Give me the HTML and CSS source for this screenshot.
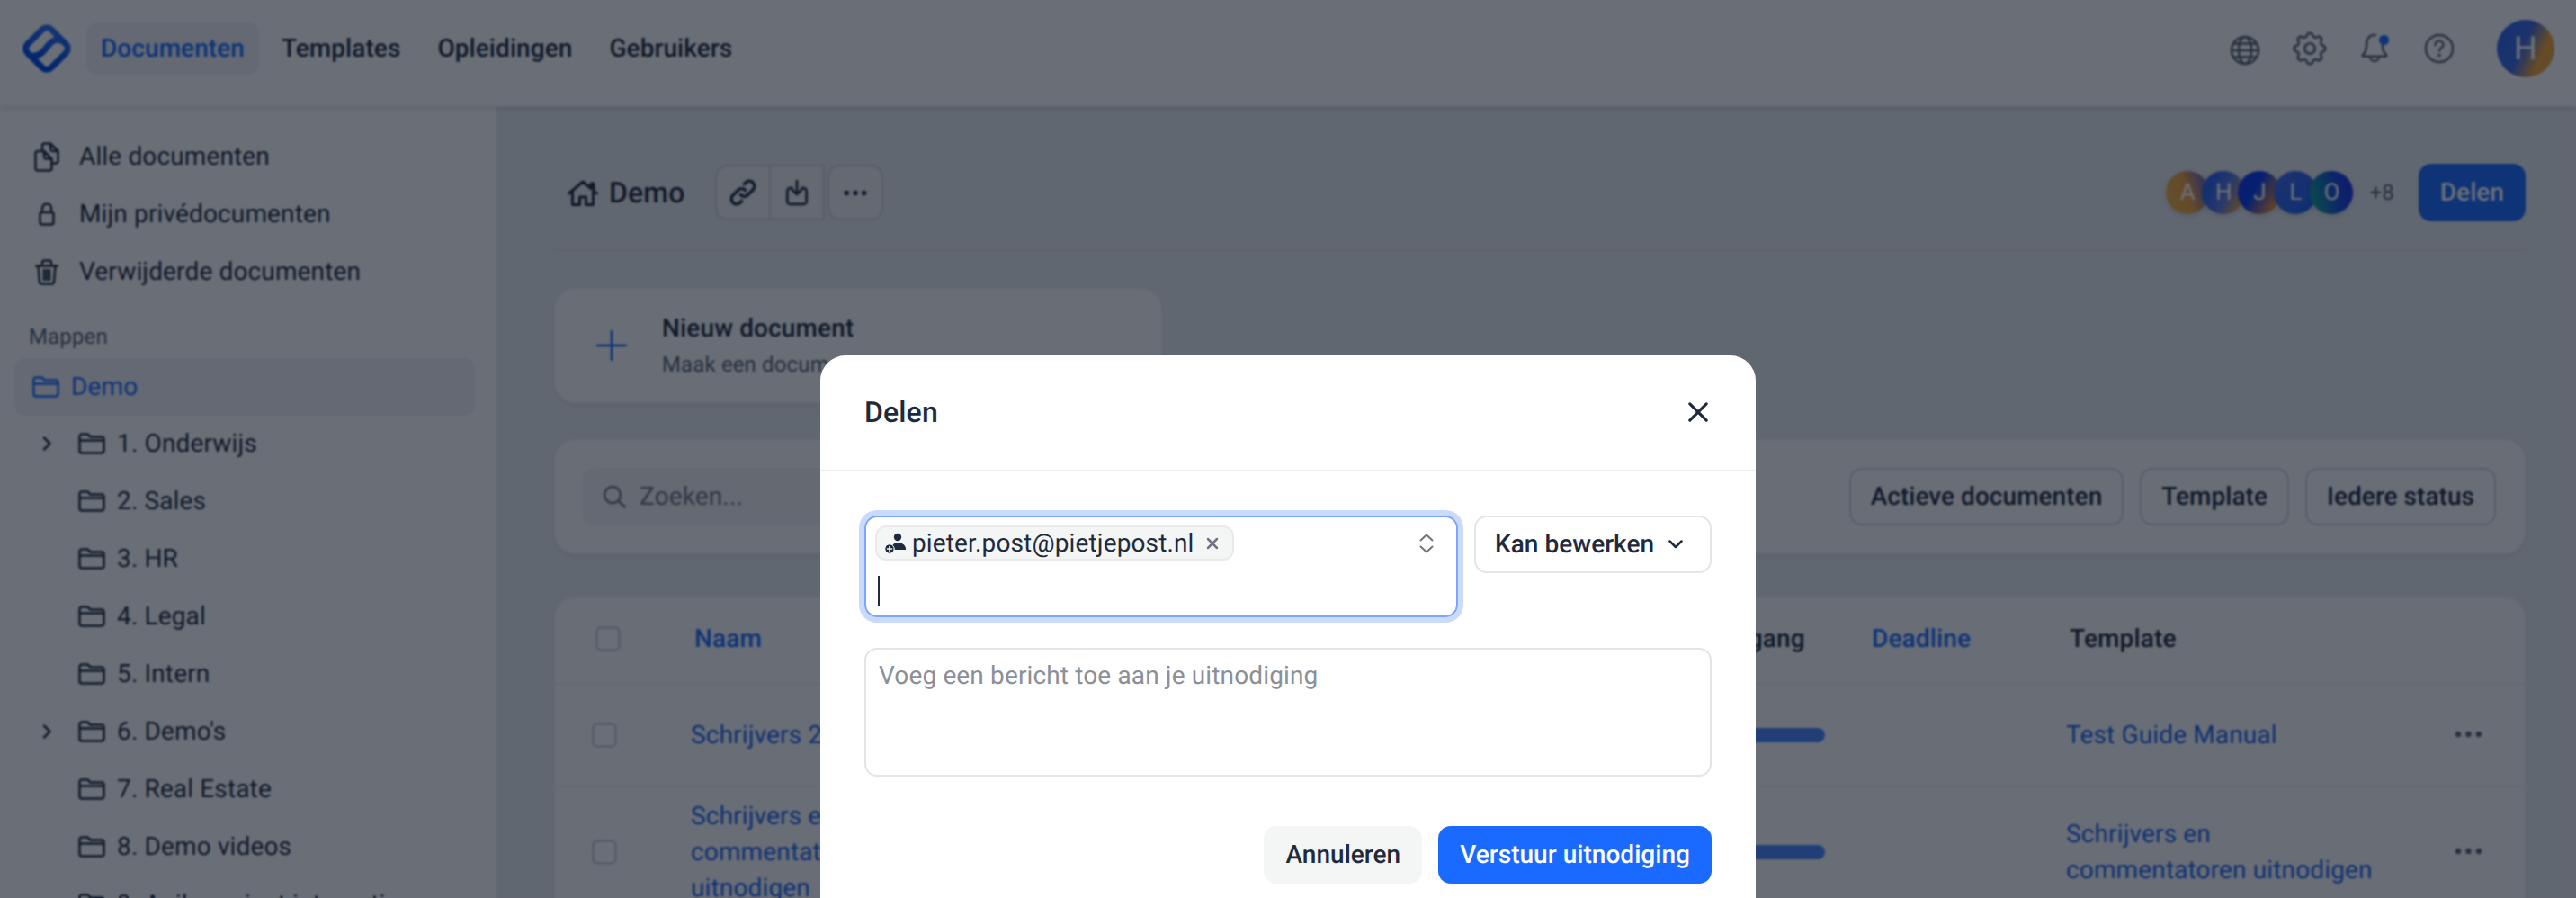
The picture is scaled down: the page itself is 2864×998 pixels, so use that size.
FILE: index.html
```html
<!DOCTYPE html>
<html lang="nl">
<head>
  <meta charset="UTF-8" />
  <title>Documenten - Demo</title>
  <link rel="stylesheet" href="styles.css">
</head>
<body>
  <svg class="sprite" xmlns="http://www.w3.org/2000/svg">
    <symbol id="i-folder" viewBox="0 0 30 24">
      <path d="M1.5 4A2.5 2.5 0 014 1.5h6.5l3 3H26A2.5 2.5 0 0128.5 7v13a2.5 2.5 0 01-2.5 2.5H4A2.5 2.5 0 011.5 20zM1.5 8.5h27" />
    </symbol>
    <symbol id="i-chevron" viewBox="0 0 12 18">
      <path d="M3 2.5L9.5 9 3 15.5" />
    </symbol>
    <symbol id="i-dots" viewBox="0 0 31 8">
      <circle class="solid" cx="4" cy="4" r="3.2" />
      <circle class="solid" cx="15.5" cy="4" r="3.2" />
      <circle class="solid" cx="27" cy="4" r="3.2" />
    </symbol>
  </svg>

  <div class="topbar">
    <svg class="logo" viewBox="0 0 56 56" xmlns="http://www.w3.org/2000/svg">
      <defs>
        <linearGradient id="logo-grad" x1="0" y1="0" x2="0.4" y2="1">
          <stop offset="0" stop-color="#2a70f5" />
          <stop offset="1" stop-color="#0048e8" />
        </linearGradient>
      </defs>
      <rect x="9.5" y="9.5" width="37" height="37" rx="7" transform="rotate(45 28 28)" fill="none" stroke="url(#logo-grad)" stroke-width="7" />
      <path d="M46 20C36 14 30 24 26 29C22 34 17 37 10 36" fill="none" stroke="url(#logo-grad)" stroke-width="7" />
    </svg>
    <a class="toplink active">Documenten</a>
    <a class="toplink">Templates</a>
    <a class="toplink">Opleidingen</a>
    <a class="toplink">Gebruikers</a>
    <div class="topicons">
      <svg class="topicon" viewBox="0 0 40 40" xmlns="http://www.w3.org/2000/svg">
        <circle cx="20" cy="22" r="15" />
        <ellipse cx="20" cy="22" rx="7" ry="15" />
        <path d="M5 22h30M7.5 14.5h25M7.5 29.5h25" />
      </svg>
      <svg class="topicon gear" viewBox="0 0 24 24" xmlns="http://www.w3.org/2000/svg">
        <path d="M10.325 4.317c.426-1.756 2.924-1.756 3.35 0a1.724 1.724 0 002.573 1.066c1.543-.94 3.31.826 2.37 2.37a1.724 1.724 0 001.065 2.572c1.756.426 1.756 2.924 0 3.35a1.724 1.724 0 00-1.066 2.573c.94 1.543-.826 3.31-2.37 2.37a1.724 1.724 0 00-2.572 1.065c-.426 1.756-2.924 1.756-3.35 0a1.724 1.724 0 00-2.573-1.066c-1.543.94-3.31-.826-2.37-2.37a1.724 1.724 0 00-1.065-2.572c-1.756-.426-1.756-2.924 0-3.35a1.724 1.724 0 001.066-2.573c-.94-1.543.826-3.31 2.37-2.37.996.608 2.296.07 2.572-1.065z" />
        <path d="M15 12a3 3 0 11-6 0 3 3 0 016 0z" />
      </svg>
      <div class="bell">
        <svg class="topicon" viewBox="0 0 40 40" xmlns="http://www.w3.org/2000/svg">
          <path d="M21 5C14 4 11 10 11 15v4c0 4-2 6-4 8a1 1 0 00.8 1.7h24.4a1 1 0 00.8-1.7c-2-2-4-4-4-8v-3" />
          <path d="M15 29a5 5 0 0010 0" />
        </svg>
        <span class="bell-dot"></span>
      </div>
      <svg class="topicon" viewBox="0 0 40 40" xmlns="http://www.w3.org/2000/svg">
        <circle cx="20" cy="20" r="15" />
        <path d="M15.5 16a4.5 4.5 0 119 0c0 3-4.5 3.5-4.5 6.5" />
        <circle class="solid" cx="20" cy="27.5" r="1.8" />
      </svg>
    </div>
    <div class="avatar-big">H</div>
  </div>

  <div class="page">
    <div class="sidebar">
      <a class="navitem">
        <span class="navicon">
          <svg viewBox="0 0 28 33" width="28" height="33" xmlns="http://www.w3.org/2000/svg">
            <path d="M9 9V4a2.5 2.5 0 012.5-2.5H18L26.5 10v11a2.5 2.5 0 01-2.5 2.5h-4.5M18 1.5V7a3 3 0 003 3h5.5" />
            <path d="M4 10h7l8.5 8.5V29a2.5 2.5 0 01-2.5 2.5H4A2.5 2.5 0 011.5 29V12.5A2.5 2.5 0 014 10zM11 10v6a2.5 2.5 0 002.5 2.5h6" />
          </svg>
        </span>
        Alle documenten
      </a>
      <a class="navitem">
        <span class="navicon">
          <svg viewBox="0 0 18 26" width="18" height="26" xmlns="http://www.w3.org/2000/svg">
            <rect x="1.5" y="11" width="15" height="13.5" rx="2.5" />
            <path d="M4 11V6.5a5 5 0 0110 0V11" />
          </svg>
        </span>
        Mijn privédocumenten
      </a>
      <a class="navitem">
        <span class="navicon">
          <svg viewBox="0 0 26 29" width="26" height="29" xmlns="http://www.w3.org/2000/svg">
            <path d="M1 7.5h24M8 7V4a2.5 2.5 0 012.5-2.5h5A2.5 2.5 0 0118 4v3M3.5 8L5 25.5a2.5 2.5 0 002.5 2h11a2.5 2.5 0 002.5-2L22.5 8M10 12v11M13 12v11M16 12v11" />
          </svg>
        </span>
        Verwijderde documenten
      </a>

      <div class="section-label">Mappen</div>

      <a class="folder-root">
        <svg class="folder" xmlns="http://www.w3.org/2000/svg"><use href="#i-folder" /></svg>
        Demo
      </a>
      <a class="treeitem"><span class="chev"><svg xmlns="http://www.w3.org/2000/svg"><use href="#i-chevron" /></svg></span><svg class="folder" xmlns="http://www.w3.org/2000/svg"><use href="#i-folder" /></svg>1. Onderwijs</a>
      <a class="treeitem"><span class="chev"></span><svg class="folder" xmlns="http://www.w3.org/2000/svg"><use href="#i-folder" /></svg>2. Sales</a>
      <a class="treeitem"><span class="chev"></span><svg class="folder" xmlns="http://www.w3.org/2000/svg"><use href="#i-folder" /></svg>3. HR</a>
      <a class="treeitem"><span class="chev"></span><svg class="folder" xmlns="http://www.w3.org/2000/svg"><use href="#i-folder" /></svg>4. Legal</a>
      <a class="treeitem"><span class="chev"></span><svg class="folder" xmlns="http://www.w3.org/2000/svg"><use href="#i-folder" /></svg>5. Intern</a>
      <a class="treeitem"><span class="chev"><svg xmlns="http://www.w3.org/2000/svg"><use href="#i-chevron" /></svg></span><svg class="folder" xmlns="http://www.w3.org/2000/svg"><use href="#i-folder" /></svg>6. Demo's</a>
      <a class="treeitem"><span class="chev"></span><svg class="folder" xmlns="http://www.w3.org/2000/svg"><use href="#i-folder" /></svg>7. Real Estate</a>
      <a class="treeitem"><span class="chev"></span><svg class="folder" xmlns="http://www.w3.org/2000/svg"><use href="#i-folder" /></svg>8. Demo videos</a>
      <a class="treeitem"><span class="chev"></span><svg class="folder" xmlns="http://www.w3.org/2000/svg"><use href="#i-folder" /></svg>9. Agile project integratie</a>
    </div>

    <div class="main">
      <div class="titlebar">
        <svg class="home" viewBox="0 0 34 29" xmlns="http://www.w3.org/2000/svg">
          <path d="M1.5 15L17 2l9 7.5V4h3v8.5l3.5 2.5M5.5 12.5V27.5h8V19h7v8.5h8V12.5" />
        </svg>
        <h1 class="title">Demo</h1>
        <div class="btngroup">
          <button class="iconbtn">
            <svg viewBox="0 0 24 24" width="34" height="34" xmlns="http://www.w3.org/2000/svg">
              <path d="M13.828 10.172a4 4 0 00-5.656 0l-4 4a4 4 0 105.656 5.656l1.102-1.101m-.758-4.899a4 4 0 005.656 0l4-4a4 4 0 00-5.656-5.656l-1.1 1.1" />
            </svg>
          </button>
          <button class="iconbtn">
            <svg viewBox="0 0 24 28" width="26" height="30" xmlns="http://www.w3.org/2000/svg">
              <path d="M7 9.5H5a3 3 0 00-3 3V23a3 3 0 003 3h14a3 3 0 003-3V12.5a3 3 0 00-3-3h-2M12 2v14M7.5 11.5L12 16l4.5-4.5" />
            </svg>
          </button>
          <button class="iconbtn alone">
            <svg class="dots" xmlns="http://www.w3.org/2000/svg"><use href="#i-dots" /></svg>
          </button>
        </div>
        <div class="members">
          <span class="member m1">A</span>
          <span class="member m2">H</span>
          <span class="member m3">J</span>
          <span class="member m4">L</span>
          <span class="member m5">O</span>
        </div>
        <span class="more">+8</span>
        <button class="btn-primary">Delen</button>
      </div>

      <div class="card newdoc">
        <svg class="plus" viewBox="0 0 34 34" xmlns="http://www.w3.org/2000/svg"><path d="M17 1v32M1 17h32" /></svg>
        <div class="newdoc-text">
          <div class="newdoc-title">Nieuw document</div>
          <div class="newdoc-sub">Maak een document aan</div>
        </div>
      </div>

      <div class="card filters">
        <div class="search">
          <svg viewBox="0 0 26 26" width="26" height="26" xmlns="http://www.w3.org/2000/svg">
            <circle cx="11" cy="11" r="9" /><path d="M18 18l6.5 6.5" />
          </svg>
          Zoeken...
        </div>
        <button class="filter">Actieve documenten</button>
        <button class="filter">Template</button>
        <button class="filter">Iedere status</button>
      </div>

      <div class="card table">
        <div class="grid head">
          <span class="check"></span>
          <span class="sorted">Naam</span>
          <span class="col-progress">Voortgang</span>
          <span class="sorted">Deadline</span>
          <span>Template</span>
        </div>
        <div class="grid row">
          <span class="check"></span>
          <a class="doclink">Schrijvers 2</a>
          <span class="bar"></span>
          <span></span>
          <a class="doclink tpl">Test Guide Manual</a>
          <svg class="dots" xmlns="http://www.w3.org/2000/svg"><use href="#i-dots" /></svg>
        </div>
        <div class="grid row">
          <span class="check"></span>
          <a class="doclink narrow">Schrijvers en commentatoren uitnodigen</a>
          <span class="bar"></span>
          <span></span>
          <a class="doclink tpl">Schrijvers en commentatoren uitnodigen</a>
          <svg class="dots" xmlns="http://www.w3.org/2000/svg"><use href="#i-dots" /></svg>
        </div>
      </div>
    </div>
  </div>

  <div class="overlay">
    <div class="modal">
      <div class="modal-head">
        <h2 class="modal-title">Delen</h2>
        <svg class="close" viewBox="0 0 24 24" xmlns="http://www.w3.org/2000/svg"><path d="M2 2l20 20M22 2L2 22" /></svg>
      </div>
      <div class="modal-body">
        <div class="invite-row">
          <div class="invite-input">
            <div>
              <span class="chip">
                <svg class="chip-user" viewBox="0 0 24 24" xmlns="http://www.w3.org/2000/svg">
                  <circle cx="15" cy="5" r="4.2" />
                  <path d="M8 19c0-5 3-8 7-8s9 2.5 9 7v1z" />
                  <circle class="plus-badge" cx="6" cy="18" r="5.2" />
                  <path class="plusmark" d="M6 15.5v5M3.5 18h5" />
                </svg>
                pieter.post@pietjepost.nl
                <svg class="chip-x" viewBox="0 0 14 14" xmlns="http://www.w3.org/2000/svg"><path d="M2 2l10 10M12 2L2 12" /></svg>
              </span>
              <span class="caret"></span>
            </div>
            <svg class="updown" viewBox="0 0 16 22" xmlns="http://www.w3.org/2000/svg"><path d="M1.5 7.5L8 1.5l6.5 6M1.5 14.5L8 20.5l6.5-6" /></svg>
          </div>
          <div class="select">
            Kan bewerken
            <svg viewBox="0 0 16 10" width="16" height="10" xmlns="http://www.w3.org/2000/svg"><path d="M1.5 1.5L8 8l6.5-6.5" /></svg>
          </div>
        </div>
        <textarea class="message" placeholder="Voeg een bericht toe aan je uitnodiging" readonly></textarea>
        <div class="modal-foot">
          <button class="btn-soft">Annuleren</button>
          <button class="btn-primary bright">Verstuur uitnodiging</button>
        </div>
      </div>
    </div>
  </div>
</body>
</html>
```

FILE: styles.css
```css
* { box-sizing: border-box; }
html, body { height: 100%; }
body {
  margin: 0;
  font-family: Roboto, sans-serif;
  font-size: 28px;
  line-height: 40px;
  letter-spacing: .14px;
  text-rendering: geometricPrecision;
  color: #1f2a3d;
  background: #e9ebee;
  display: flex;
  flex-direction: column;
  overflow: hidden;
}
.sprite { display: none; }
svg { fill: none; stroke: currentColor; stroke-width: 2.5; stroke-linecap: round; stroke-linejoin: round; flex: none; }
svg .solid { fill: currentColor; stroke: none; }
button { font: inherit; letter-spacing: inherit; color: inherit; cursor: pointer; background: none; border: none; padding: 0; text-rendering: inherit; }
h1, h2 { margin: 0; }

/* top bar */
.topbar {
  height: 119px;
  flex: none;
  display: flex;
  align-items: center;
  padding: 0 24px 10px;
  background: #fff;
  border-bottom: 2px solid #eceef0;
  box-shadow: 0 2px 6px rgba(16, 24, 40, .12);
  position: relative;
  z-index: 2;
}
.logo { width: 56px; height: 56px; margin-right: 16px; }
.toplink {
  height: 58px;
  display: flex;
  align-items: center;
  padding: 0 16px;
  margin-right: 9px;
  border-radius: 12px;
  font-weight: 500;
  letter-spacing: .07px;
}
.toplink.active { background: #eff1f8; color: #1a6aff; }
.topicons { margin-left: auto; display: flex; align-items: center; gap: 32px; color: #5b6475; }
.topicon { width: 40px; height: 40px; display: block; }
.topicon.gear { width: 46px; height: 46px; margin: -3px; stroke-width: 1.4; }
.bell { position: relative; }
.bell-dot {
  position: absolute;
  top: 5px;
  right: 4px;
  width: 11px;
  height: 11px;
  border-radius: 50%;
  background: #1a6aff;
}
.avatar-big {
  width: 64px;
  height: 64px;
  margin: 0 0 0 44px;
  border-radius: 50%;
  display: flex;
  align-items: center;
  justify-content: center;
  color: #fff;
  font-size: 36px;
  background: linear-gradient(115deg, #2c62f0 0%, #3f68e0 45%, #f2a53a 72%);
}

.page { flex: 1; display: flex; min-height: 0; }

/* sidebar */
.sidebar {
  width: 554px;
  flex: none;
  padding: 23px 24px 0 16px;
  background: #fff;
  border-right: 2px solid #e9ebee;
  overflow: hidden;
}
.navitem {
  height: 64px;
  display: flex;
  align-items: center;
  padding-left: 16px;
}
.navicon { width: 40px; margin-right: 16px; display: flex; justify-content: center; }
.section-label {
  margin: 25px 0 9px 16px;
  font-size: 24px;
  line-height: 30px;
  color: #5b6475;
}
.folder-root {
  height: 64px;
  margin-bottom: -1px;
  display: flex;
  align-items: center;
  padding-left: 20px;
  border-radius: 12px;
  background: #eff1f8;
  color: #1a6aff;
}
.folder { width: 30px; height: 24px; margin-right: 13px; }
.treeitem { height: 64px; display: flex; align-items: center; padding-left: 20px; }
.chev { width: 32px; margin-right: 19px; display: flex; justify-content: center; }
.chev svg { width: 12px; height: 18px; }

/* main column */
.main { flex: 1; min-width: 0; padding: 0 56px 0 62px; }
.titlebar {
  display: flex;
  align-items: center;
  padding: 63px 0 31px 15px;
  border-bottom: 2px solid #dcdfe3;
  margin-bottom: 41px;
}
.home { width: 34px; height: 29px; margin-right: 12px; stroke-width: 3; }
.title { font-size: 32px; font-weight: 500; }
.btngroup { display: flex; margin-left: 33px; }
.iconbtn {
  width: 62px;
  height: 62px;
  display: flex;
  align-items: center;
  justify-content: center;
  border: 2px solid #d2d5da;
  margin-left: -2px;
  background: #eff0f2;
}
.iconbtn:first-child { border-radius: 14px 0 0 14px; margin-left: 0; }
.iconbtn.alone { border-radius: 14px; margin-left: 3px; }
.dots { width: 31px; height: 8px; color: #5b6475; }
.iconbtn .dots { width: 26px; height: 7px; color: #1f2a3d; }
.members { margin-left: auto; display: flex; }
.member {
  width: 48px;
  height: 48px;
  margin-left: -8px;
  border-radius: 50%;
  display: flex;
  align-items: center;
  justify-content: center;
  color: #fff;
  font-size: 26px;
  box-shadow: 0 2px 6px rgba(16, 24, 40, .15);
}
.member:first-child { margin-left: 0; }
.m1 { background: linear-gradient(70deg, #f0b845 0%, #f2a040 50%, #3f58d8 100%); }
.m2 { background: linear-gradient(115deg, #2c62f0 25%, #5a78e0 55%, #f2a53a 90%); }
.m3 { background: linear-gradient(120deg, #0838f0 40%, #f09030 85%, #f04a20 100%); }
.m4 { background: linear-gradient(135deg, #3f68e8 0%, #1a5ff0 100%); }
.m5 { background: linear-gradient(75deg, #0f9a9a 15%, #1548d8 60%, #1a28f0 100%); }
.more { margin: 0 27px 0 18px; font-size: 24px; color: #5b6475; }
.btn-primary {
  height: 64px;
  padding: 0 24px;
  border-radius: 14px;
  background: #1a6aff;
  color: #fff;
  font-weight: 500;
  letter-spacing: .04px;
}
.card {
  background: #fcfcfd;
  border-radius: 24px;
  border: 2px solid #f4f5f6;
  box-shadow: 0 2px 5px rgba(16, 24, 40, .08);
}
.newdoc {
  width: 676px;
  height: 128px;
  display: flex;
  align-items: center;
  padding-left: 45px;
  margin-bottom: 40px;
}
.plus { width: 34px; height: 34px; margin-right: 39px; color: #1a6aff; }
.newdoc-text { padding-top: 2px; }
.newdoc-title { font-weight: 500; }
.newdoc-sub { font-size: 24px; color: #5b6475; }
.filters {
  height: 128px;
  display: flex;
  align-items: center;
  gap: 18px;
  padding: 0 31px 0 30px;
  margin-bottom: 47px;
}
.search {
  width: 800px;
  height: 64px;
  margin-right: auto;
  display: flex;
  align-items: center;
  gap: 15px;
  padding-left: 22px;
  border-radius: 12px;
  background: #f0f1f3;
  color: #70767f;
}
.filter {
  height: 64px;
  padding: 0 22px;
  border: 2px solid #d2d5da;
  border-radius: 14px;
  font-weight: 500;
  letter-spacing: .04px;
}

/* document table */
.table { overflow: hidden; }
.grid {
  display: grid;
  grid-template-columns: 150px 1096px 213px 220px 400px 1fr;
  align-items: center;
  border-bottom: 2px solid #eceef0;
}
.head { height: 96px; padding: 0 0 4px 4px; font-weight: 500; }
.col-progress { padding-left: 6px; }
.row { min-height: 114px; padding: 12px 0; }
.check {
  display: block;
  width: 28px;
  height: 28px;
  margin-left: 40px;
  border: 3px solid #d3d6db;
  border-radius: 6px;
  background: #fff;
}
.sorted { color: #1a6aff; }
.doclink { color: #1a62f0; }
.doclink.narrow { display: block; width: 220px; }
.doclink.tpl { display: block; width: 345px; }
.bar {
  display: block;
  width: 149px;
  height: 16px;
  margin-left: 16px;
  border-radius: 8px;
  background: #4a86ff;
}
.row .dots { margin: 0 0 2px 32px; }

/* share dialog, over a dimmed page */
.overlay {
  position: fixed;
  inset: 0;
  z-index: 10;
  display: flex;
  justify-content: center;
  align-items: flex-start;
  padding-top: 395px;
  overflow: hidden;
  background: rgba(7, 15, 28, .6);
  backdrop-filter: blur(1px);
}
.modal { width: 1040px; flex: none; background: #fff; border-radius: 28px; }
.modal-head {
  height: 129px;
  display: flex;
  align-items: center;
  justify-content: space-between;
  padding: 0 53px 2px 49px;
  border-bottom: 2px solid #ececee;
}
.modal-title { font-size: 32px; font-weight: 500; }
.close { width: 22px; height: 22px; stroke-width: 3.5; }
.modal-body { padding: 49px 49px 48px; }
.invite-row { display: flex; align-items: flex-start; gap: 18px; }
.invite-input {
  width: 660px;
  height: 113px;
  display: flex;
  justify-content: space-between;
  padding: 9px 25px 0 10px;
  border: 2px solid #7ba6fd;
  border-radius: 14px;
  box-shadow: 0 0 0 6px #c9dafc;
}
.chip {
  display: flex;
  align-items: center;
  width: 399px;
  height: 39px;
  padding-left: 8px;
  border: 2px solid #e8eaec;
  border-radius: 12px;
  background: #f4f5f5;
}
.chip-user { width: 24px; height: 24px; margin-right: 7px; stroke: none; fill: #1f2a3d; }
.chip-user .plus-badge { stroke: #f4f5f5; stroke-width: 1; }
.chip-user .plusmark { stroke: #f4f5f5; stroke-width: 1.6; fill: none; }
.chip-x { width: 14px; height: 14px; margin-left: 13px; color: #6f7580; }
.caret { display: block; width: 2px; height: 33px; margin: 17px 0 0 3px; background: #1f2a3d; }
.updown { width: 16px; height: 22px; margin-top: 9px; color: #6f7580; stroke-width: 2; }
.select {
  flex: 1;
  height: 64px;
  display: flex;
  align-items: center;
  gap: 16px;
  padding-left: 21px;
  border: 2px solid #e4e5e7;
  border-radius: 14px;
  font-weight: 500;
  letter-spacing: .04px;
}
.message {
  display: block;
  width: 100%;
  height: 143px;
  margin-top: 34px;
  padding: 9px 14px;
  border: 2px solid #e4e5e7;
  border-radius: 14px;
  font: inherit;
  letter-spacing: inherit;
  text-rendering: inherit;
  outline: none;
  resize: none;
}
.message::placeholder { color: #8b8f98; }
.modal-foot { display: flex; justify-content: flex-end; gap: 18px; margin-top: 55px; }
.btn-soft {
  height: 64px;
  padding: 0 24px;
  border-radius: 14px;
  background: #f4f5f5;
  font-weight: 500;
  letter-spacing: .04px;
}
```
